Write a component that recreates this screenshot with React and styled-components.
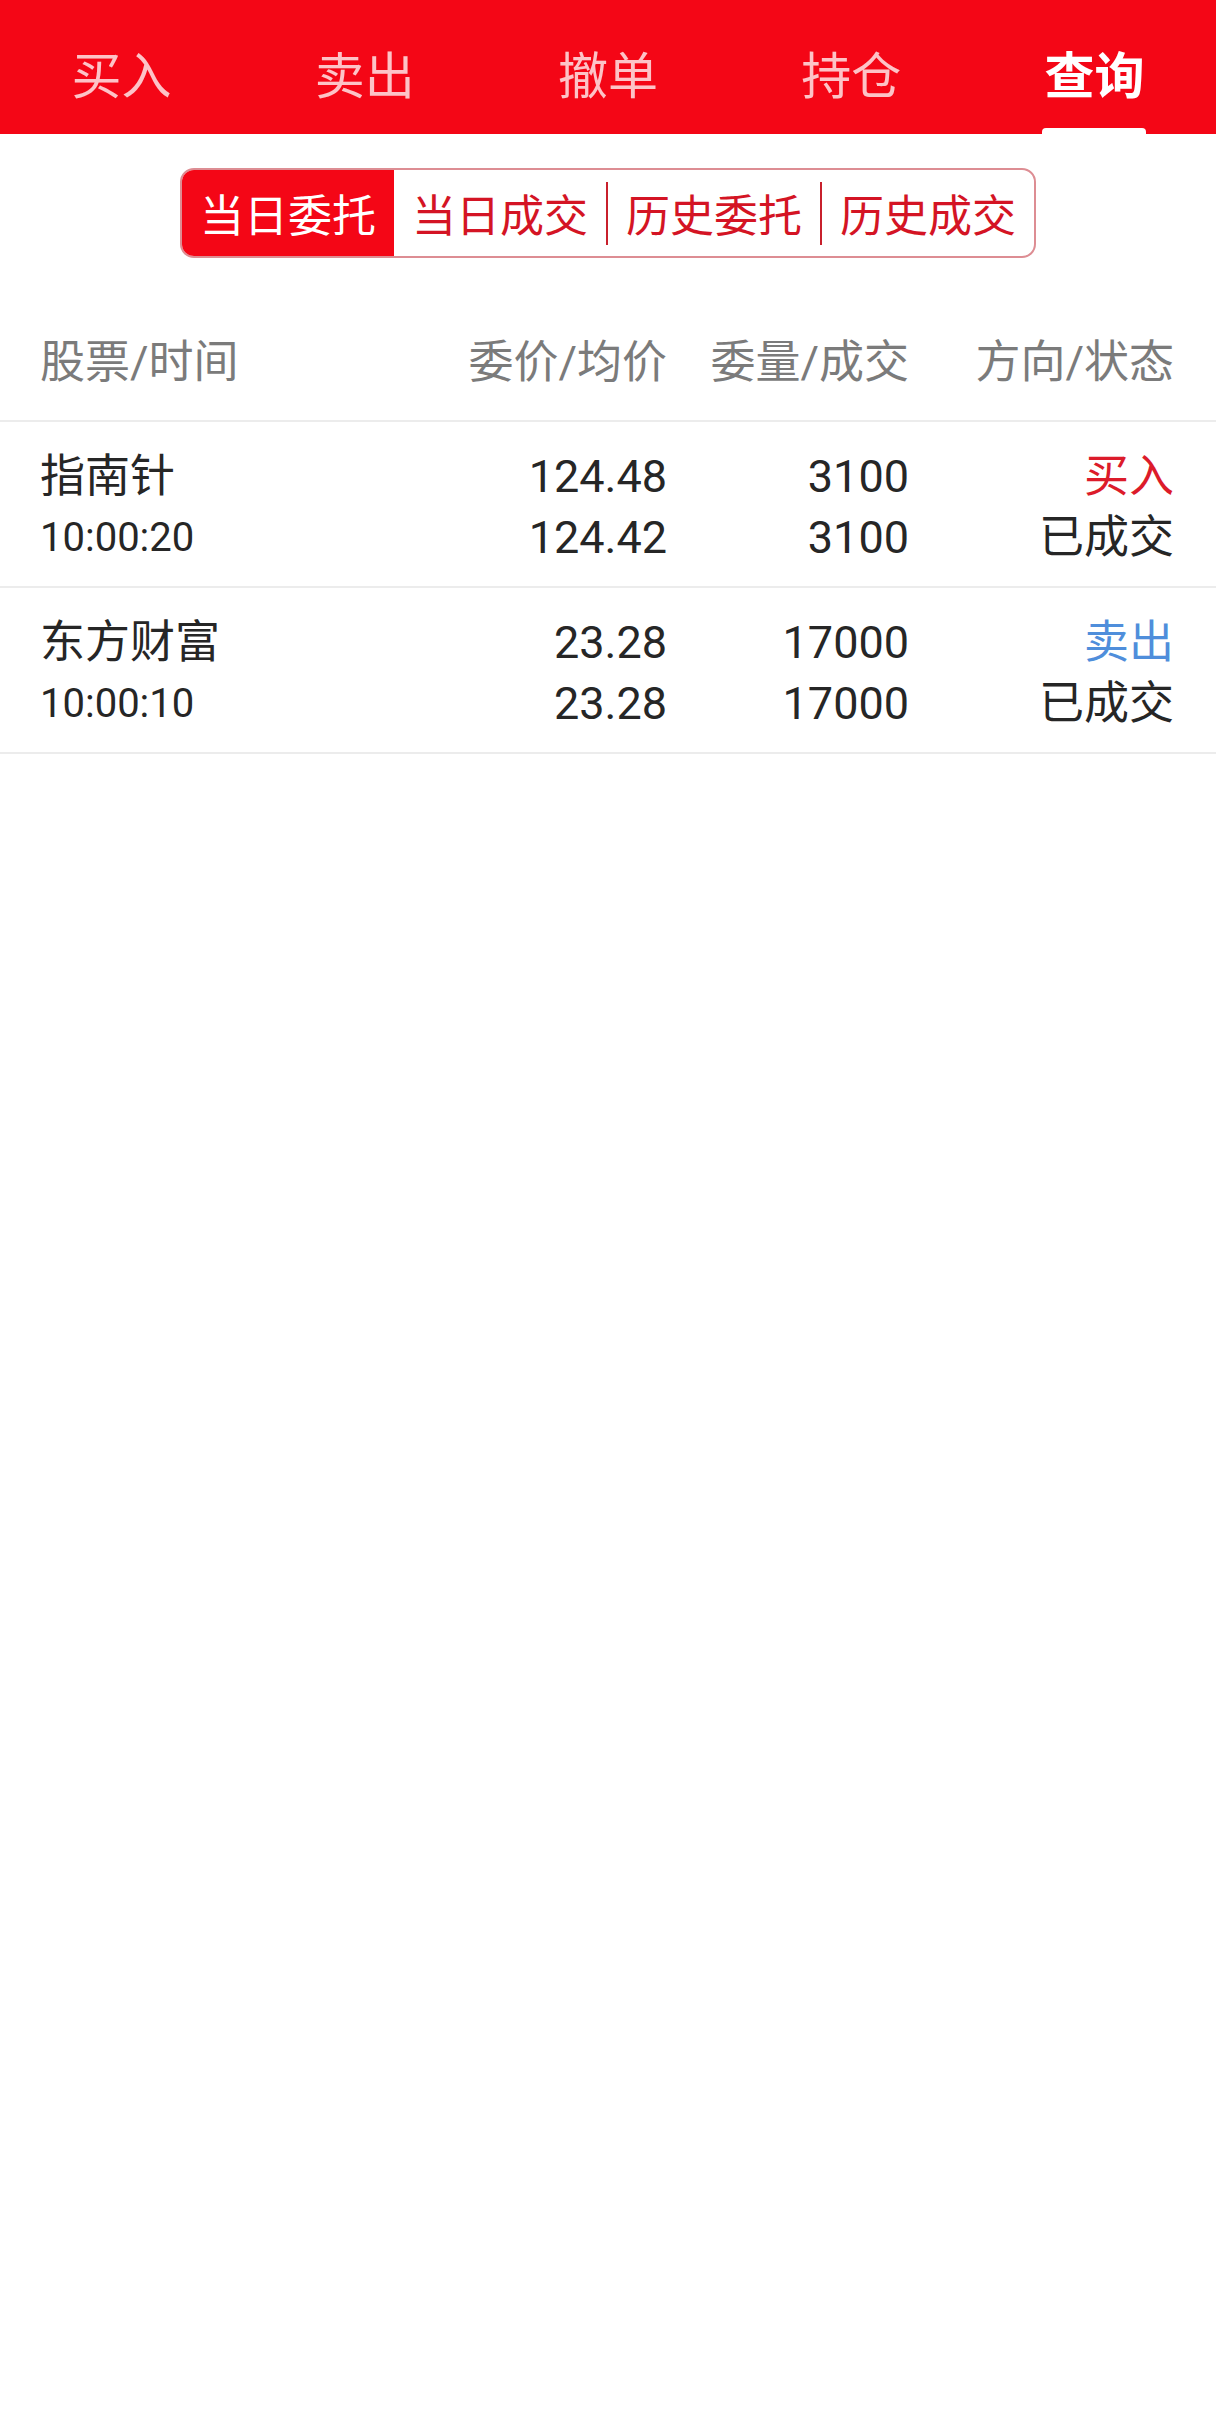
import { useState } from 'react';
import styled, { createGlobalStyle } from 'styled-components';

const RED = '#f40616';

const TABS = ['买入', '卖出', '撤单', '持仓', '查询'];
const SEGMENTS = ['当日委托', '当日成交', '历史委托', '历史成交'];

const ORDERS = [
	{ name: '指南针', time: '10:00:20', price: '124.48', avg: '124.42', qty: '3100', done: '3100', side: 'buy', status: '已成交' },
	{ name: '东方财富', time: '10:00:10', price: '23.28', avg: '23.28', qty: '17000', done: '17000', side: 'sell', status: '已成交' },
];

function App() {
	const [tab, setTab] = useState(4);
	const [segment, setSegment] = useState(0);

	return (
		<>
			<GlobalStyle />
			<Page>
				<TopBar>
					{TABS.map((label, i) => (
						<Tab key={label} onClick={() => setTab(i)}>
							<TabLabel active={i === tab}>{label}</TabLabel>
							<Indicator active={i === tab} />
						</Tab>
					))}
				</TopBar>

				<SegmentWrap>
					<Segmented>
						{SEGMENTS.map((label, i) => (
							<SegmentSlot key={label}>
								{i > 0 && i !== segment && i - 1 !== segment && <Divider />}
								<Segment active={i === segment} onClick={() => setSegment(i)}>
									{label}
								</Segment>
							</SegmentSlot>
						))}
					</Segmented>
				</SegmentWrap>

				<HeadRow>
					<HeadCell>股票/时间</HeadCell>
					<HeadCell right>委价/均价</HeadCell>
					<HeadCell right>委量/成交</HeadCell>
					<HeadCell right>方向/状态</HeadCell>
				</HeadRow>

				{ORDERS.map((o) => (
					<Row key={o.name}>
						<Cell>
							<Line>{o.name}</Line>
							<TimeLine>{o.time}</TimeLine>
						</Cell>
						<Cell right>
							<Line>{o.price}</Line>
							<Line>{o.avg}</Line>
						</Cell>
						<Cell right>
							<Line>{o.qty}</Line>
							<Line>{o.done}</Line>
						</Cell>
						<Cell right>
							<Line side={o.side}>{o.side === 'buy' ? '买入' : '卖出'}</Line>
							<Line>{o.status}</Line>
						</Cell>
					</Row>
				))}
			</Page>
		</>
	);
}

export default App;

const GlobalStyle = createGlobalStyle`
	html, body {
		margin: 0;
		padding: 0;
		background: #fff;
	}
	body {
		font-family: Roboto, "Noto Sans CJK SC", "Noto Sans", sans-serif;
		color: #262626;
	}
`;

const Page = styled.div`
	min-height: 2422px;
	background: #fff;
`;

const TopBar = styled.div`
	display: flex;
	height: 134px;
	background: ${RED};
`;

const Tab = styled.div`
	flex: 1;
	display: flex;
	flex-direction: column;
	align-items: center;
	padding-top: 47px;
	cursor: pointer;
`;

const TabLabel = styled.span`
	font-size: 50px;
	line-height: 60px;
	font-weight: ${(p) => (p.active ? 600 : 400)};
	color: ${(p) => (p.active ? '#fff' : 'rgba(255, 255, 255, 0.76)')};
`;

const Indicator = styled.div`
	width: 104px;
	height: 6px;
	margin-top: 21px;
	border-radius: 4px 4px 0 0;
	background: ${(p) => (p.active ? '#fff' : 'transparent')};
`;

const SegmentWrap = styled.div`
	display: flex;
	justify-content: center;
	padding: 34px 0 38px;
`;

const Segmented = styled.div`
	display: flex;
	height: 90px;
	box-sizing: border-box;
	border: 2px solid #dd8d93;
	border-radius: 14px;
	overflow: hidden;
`;

const SegmentSlot = styled.div`
	display: flex;
	align-items: center;
`;

const Divider = styled.span`
	width: 2px;
	height: 63px;
	background: #c8202c;
`;

const Segment = styled.div`
	align-self: stretch;
	display: flex;
	align-items: center;
	padding: 0 18px;
	font-size: 44px;
	background: ${(p) => (p.active ? RED : 'transparent')};
	color: ${(p) => (p.active ? '#fff' : '#d41424')};
	cursor: pointer;
`;

const grid = `
	display: grid;
	grid-template-columns: 1fr 260px 242px 265px;
	padding: 0 42px 0 40px;
	border-bottom: 2px solid #ececec;
`;

const HeadRow = styled.div`
	${grid}
	height: 126px;
	box-sizing: border-box;
	align-items: center;
`;

const HeadCell = styled.div`
	font-size: 45px;
	color: #7b7b7b;
	text-align: ${(p) => (p.right ? 'right' : 'left')};
`;

const Row = styled.div`
	${grid}
	padding-top: 24px;
	padding-bottom: 18px;
`;

const Cell = styled.div`
	display: flex;
	flex-direction: column;
	align-items: ${(p) => (p.right ? 'flex-end' : 'flex-start')};
`;

const Line = styled.div`
	font-size: 45px;
	line-height: 61px;
	color: ${(p) => (p.side === 'buy' ? '#dc1b2a' : p.side === 'sell' ? '#4f8edb' : '#262626')};
`;

const TimeLine = styled.div`
	font-size: 40px;
	line-height: 61px;
	color: #262626;
`;
